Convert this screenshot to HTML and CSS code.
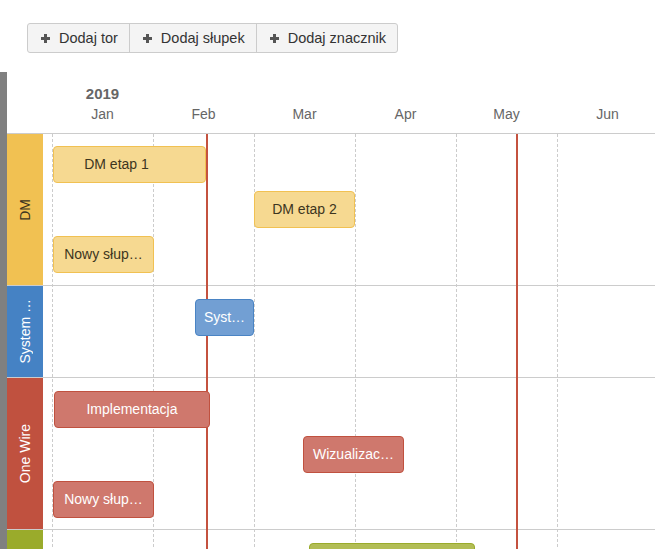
FILE: index.html
```html
<!DOCTYPE html>
<html lang="pl">

<head>
  <meta charset="UTF-8">
  <meta name="viewport" content="width=device-width, initial-scale=1.0">
  <title>Harmonogram</title>
  <link rel="stylesheet" href="styles.css">
</head>

<body>
  <!-- Toolbar -->
  <div class="toolbar">
    <button class="tool-btn"><svg class="plus" viewBox="0 0 9 9"><rect x="3" y="0" width="3" height="9"/><rect x="0" y="3" width="9" height="3"/></svg>Dodaj tor</button>
    <button class="tool-btn"><svg class="plus" viewBox="0 0 9 9"><rect x="3" y="0" width="3" height="9"/><rect x="0" y="3" width="9" height="3"/></svg>Dodaj słupek</button>
    <button class="tool-btn"><svg class="plus" viewBox="0 0 9 9"><rect x="3" y="0" width="3" height="9"/><rect x="0" y="3" width="9" height="3"/></svg>Dodaj znacznik</button>
  </div>

  <div class="chart">
    <div class="chart-head">
      <div class="head-spacer"></div>
      <div class="head-scale">
        <div class="year-row"><div class="year">2019</div></div>
        <div class="month-row">
          <div class="month">Jan</div>
          <div class="month">Feb</div>
          <div class="month">Mar</div>
          <div class="month">Apr</div>
          <div class="month">May</div>
          <div class="month">Jun</div>
        </div>
      </div>
    </div>

    <div class="chart-body">
      <!-- month grid and markers -->
      <div class="grid">
        <div class="grid-col"></div>
        <div class="grid-col"></div>
        <div class="grid-col"></div>
        <div class="grid-col"></div>
        <div class="grid-col"></div>
        <div class="grid-col"></div>
        <div class="marker" style="left: 154px"></div>
        <div class="marker" style="left: 464px"></div>
      </div>

      <div class="lane lane-dm">
        <div class="lane-label"><span>DM</span></div>
        <div class="lane-track">
          <div class="bar bar-dm bar-offset" style="left: 10px; top: 12px; width: 153px">DM etap 1</div>
          <div class="bar bar-dm" style="left: 211px; top: 57px; width: 101px">DM etap 2</div>
          <div class="bar bar-dm" style="left: 10px; top: 102px; width: 101px">Nowy słup…</div>
        </div>
      </div>

      <div class="lane lane-sys lane-small">
        <div class="lane-label"><span>System …</span></div>
        <div class="lane-track">
          <div class="bar bar-sys" style="left: 152px; top: 13px; width: 59px">Syst…</div>
        </div>
      </div>

      <div class="lane lane-ow">
        <div class="lane-label"><span>One Wire</span></div>
        <div class="lane-track">
          <div class="bar bar-ow" style="left: 11px; top: 13px; width: 156px">Implementacja</div>
          <div class="bar bar-ow" style="left: 260px; top: 58px; width: 101px">Wizualizac…</div>
          <div class="bar bar-ow" style="left: 10px; top: 103px; width: 101px">Nowy słup…</div>
        </div>
      </div>

      <div class="lane lane-gr">
        <div class="lane-label"><span>Integracja z systemem zewnętrznym</span></div>
        <div class="lane-track">
          <div class="bar bar-gr" style="left: 266px; top: 13px; width: 166px"></div>
        </div>
      </div>
    </div>
  </div>
</body>

</html>
```

FILE: styles.css
```css
html, body {
  margin: 0;
  overflow: hidden;
}
body {
  font-family: "Liberation Sans", Arial, sans-serif;
  font-size: 14px;
  color: #333;
  background: #fff;
}

/* Toolbar */
.toolbar {
  display: inline-flex;
  margin: 23px 0 0 27px;
  border: 1px solid #ccc;
  border-radius: 3px;
  background: #f4f4f4;
}
.tool-btn {
  display: flex;
  align-items: center;
  height: 28px;
  padding: 0 11px 0 13px;
  border: none;
  border-left: 1px solid #ccc;
  background: transparent;
  font: inherit;
  font-size: 14.5px;
  color: #333;
}
.tool-btn:first-child {
  border-left: none;
}
.plus {
  width: 9px;
  height: 9px;
  margin-right: 9px;
  fill: #555;
}

/* Chart */
.chart {
  margin-top: 19px;
  border-left: 7px solid #808080;
  height: 500px;
}
.chart-head {
  display: flex;
  height: 61px;
  border-bottom: 1px solid #ccc;
}
.head-spacer {
  width: 36px;
  flex: none;
}
.head-scale {
  padding: 12px 0 0 9px;
}
.year-row, .month-row {
  display: flex;
  line-height: 20px;
}
.year {
  width: 101px;
  text-align: center;
  font-weight: bold;
  font-size: 15px;
  color: #666;
}
.month {
  width: 101px;
  flex: none;
  text-align: center;
  color: #666;
}

.chart-body {
  position: relative;
}
.grid {
  position: absolute;
  top: 0;
  bottom: 0;
  left: 45px;
  display: flex;
}
.grid-col {
  width: 101px;
  flex: none;
  border-left: 1px dashed #ccc;
  box-sizing: border-box;
}
.marker {
  position: absolute;
  top: 0;
  bottom: 0;
  width: 2px;
  background: #c4523f;
}

/* Lanes */
.lane {
  display: flex;
  height: 151px;
  border-bottom: 1px solid #ccc;
}
.lane-small {
  height: 91px;
}
.lane-label {
  width: 36px;
  flex: none;
  display: flex;
  align-items: center;
  justify-content: center;
  color: #fff;
}
.lane-label span {
  writing-mode: vertical-rl;
  transform: rotate(180deg);
  max-height: calc(100% - 20px);
  white-space: nowrap;
  overflow: hidden;
  text-overflow: ellipsis;
}
.lane-track {
  position: relative;
  flex: 1;
}
.lane-dm .lane-label { background: #f1c152; color: #3d3520; }
.lane-sys .lane-label { background: #4582c4; }
.lane-ow .lane-label { background: #c0513f; }
.lane-gr .lane-label { background: #9aab2b; }

/* Bars */
.bar {
  position: absolute;
  z-index: 1;
  height: 37px;
  box-sizing: border-box;
  padding: 0 5px;
  border: 1px solid;
  border-radius: 4px;
  line-height: 35px;
  text-align: center;
  white-space: nowrap;
  overflow: hidden;
  text-overflow: ellipsis;
  color: #fff;
}
.bar-offset {
  padding-right: 31px;
}
.bar-dm { background: #f6d991; border-color: #f1c152; color: #3d3520; }
.bar-sys { background: #729fd3; border-color: #4a84c4; }
.bar-ow { background: #cf786d; border-color: #c0513f; }
.bar-gr { background: #b2bd55; border-color: #9aab2b; }
```
